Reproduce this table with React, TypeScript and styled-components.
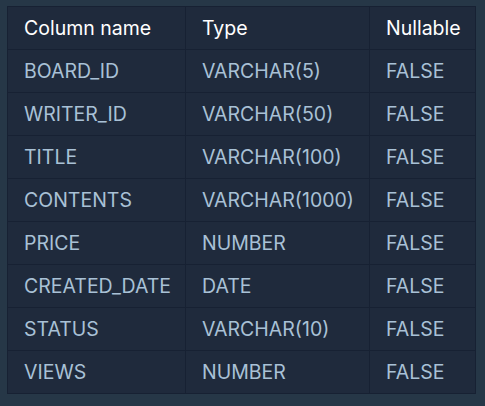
import React from "react";
import styled, { createGlobalStyle } from "styled-components";

const Global = createGlobalStyle`
  html, body { margin: 0; padding: 0; background: #263747; }
  body { font-family: Inter, Roboto, "Liberation Sans", Arial, sans-serif; }
`;

const Page = styled.div`
  padding: 6px 10px 12px 7px;
`;

const Table = styled.table`
  border-collapse: collapse;
  width: 468px;
  table-layout: fixed;
  background: #1f2a3c;
  font-size: 19.5px;
`;

const HeadCell = styled.th<{ $w: number }>`
  width: ${(p) => p.$w}px;
  height: 43px;
  padding: 0 16px;
  box-sizing: border-box;
  text-align: left;
  font-weight: 400;
  color: #ffffff;
  border: 1px solid #172133;
`;

const Cell = styled.td`
  height: 43px;
  padding: 0 16px;
  box-sizing: border-box;
  color: #a9c1d6;
  border: 1px solid #172133;
  white-space: nowrap;
`;

const rows: [string, string, string][] = [
  ["BOARD_ID", "VARCHAR(5)", "FALSE"],
  ["WRITER_ID", "VARCHAR(50)", "FALSE"],
  ["TITLE", "VARCHAR(100)", "FALSE"],
  ["CONTENTS", "VARCHAR(1000)", "FALSE"],
  ["PRICE", "NUMBER", "FALSE"],
  ["CREATED_DATE", "DATE", "FALSE"],
  ["STATUS", "VARCHAR(10)", "FALSE"],
  ["VIEWS", "NUMBER", "FALSE"],
];

export default function App() {
  return (
    <>
      <Global />
      <Page>
        <Table>
          <thead>
            <tr>
              <HeadCell $w={178}>Column name</HeadCell>
              <HeadCell $w={184}>Type</HeadCell>
              <HeadCell $w={106}>Nullable</HeadCell>
            </tr>
          </thead>
          <tbody>
            {rows.map((r) => (
              <tr key={r[0]}>
                <Cell>{r[0]}</Cell>
                <Cell>{r[1]}</Cell>
                <Cell>{r[2]}</Cell>
              </tr>
            ))}
          </tbody>
        </Table>
      </Page>
    </>
  );
}
